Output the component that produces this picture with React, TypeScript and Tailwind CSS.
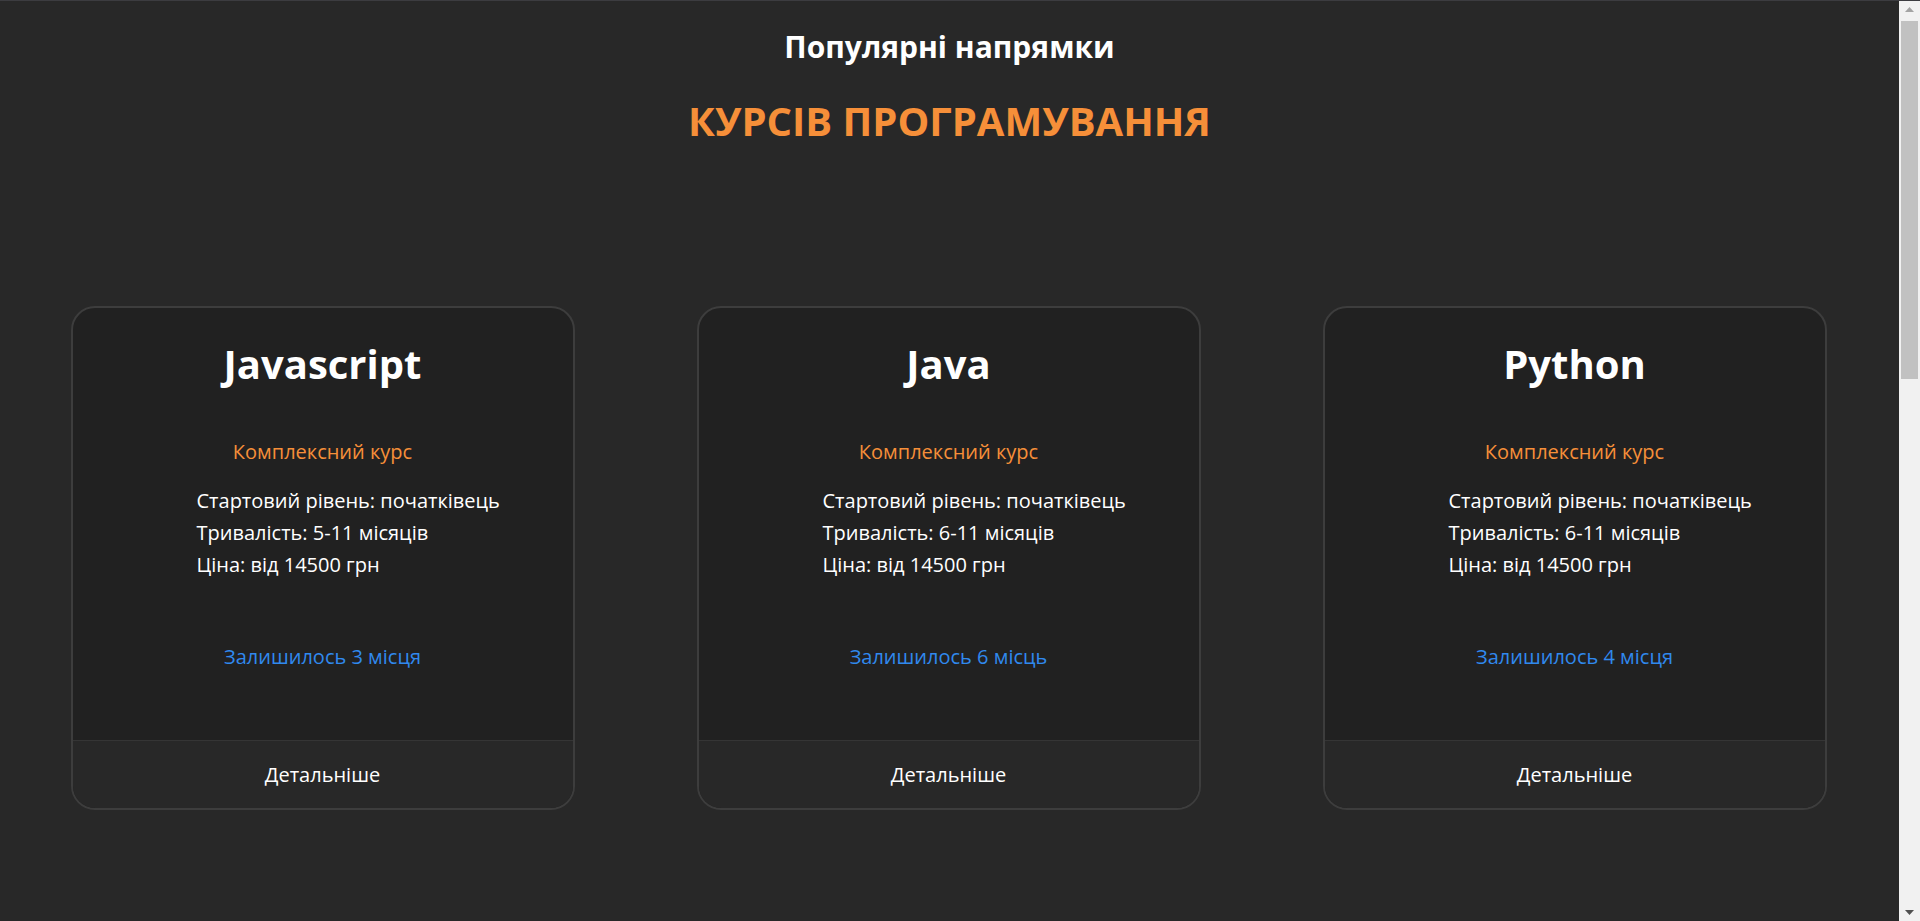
const courses = [
  { name: "Javascript", duration: "5-11 місяців", seats: "Залишилось 3 місця" },
  { name: "Java", duration: "6-11 місяців", seats: "Залишилось 6 місць" },
  { name: "Python", duration: "6-11 місяців", seats: "Залишилось 4 місця" },
];

function CourseCard({ name, duration, seats }: { name: string; duration: string; seats: string }) {
  return (
    <div className="w-[504px] shrink-0 rounded-[24px] border-2 border-[#3d3d3d] bg-[#212121] overflow-hidden flex flex-col">
      <div className="h-[432px] flex flex-col pt-[29px]">
        <h3 className="text-center text-[40px] leading-[54px] font-bold text-white">{name}</h3>
        <p className="mt-[49px] text-center text-[20px] leading-[24px] text-[#f68f39]">Комплексний курс</p>
        <ul className="mt-[21px] pl-[124px] text-[20px] leading-[32px] text-white">
          <li>Стартовий рівень: початківець</li>
          <li>Тривалість: {duration}</li>
          <li>Ціна: від 14500 грн</li>
        </ul>
        <p className="mt-[64px] text-center text-[20px] leading-[24px] text-[#3089ee]">{seats}</p>
      </div>
      <div className="border-t border-[#353535] bg-[#282828] h-[68px] flex items-center justify-center">
        <span className="text-[20px] text-white">Детальніше</span>
      </div>
    </div>
  );
}

function Scrollbar() {
  return (
    <div className="w-[21px] shrink-0 bg-[#f1f1f1] flex flex-col items-center justify-between py-[6px]">
      <div className="flex flex-col items-center w-full">
        <svg width="9" height="5" viewBox="0 0 9 5">
          <path d="M4.5 0 L9 5 L0 5 Z" fill="#a3a3a3" />
        </svg>
        <div className="mt-[9px] w-[17px] h-[358px] bg-[#c1c1c1]" />
      </div>
      <svg width="9" height="5" viewBox="0 0 9 5">
        <path d="M0 0 L9 0 L4.5 5 Z" fill="#505050" />
      </svg>
    </div>
  );
}

export default function App() {
  return (
    <div className="h-[921px] overflow-hidden flex border-t border-[#3c3c40] bg-[#282828] font-['Open_Sans',sans-serif]">
      <main className="flex-1 min-w-0">
        <div className="pt-[26px] text-center">
          <h2 className="text-[30px] leading-[40px] font-bold text-white">Популярні напрямки</h2>
          <h1 className="mt-[27px] text-[40px] leading-[54px] font-bold text-[#f68f39]">КУРСІВ ПРОГРАМУВАННЯ</h1>
        </div>
        <div className="mt-[158px] flex justify-center gap-[122px] pr-[2px]">
          {courses.map((c) => (
            <CourseCard key={c.name} {...c} />
          ))}
        </div>
      </main>
      <Scrollbar />
    </div>
  );
}
